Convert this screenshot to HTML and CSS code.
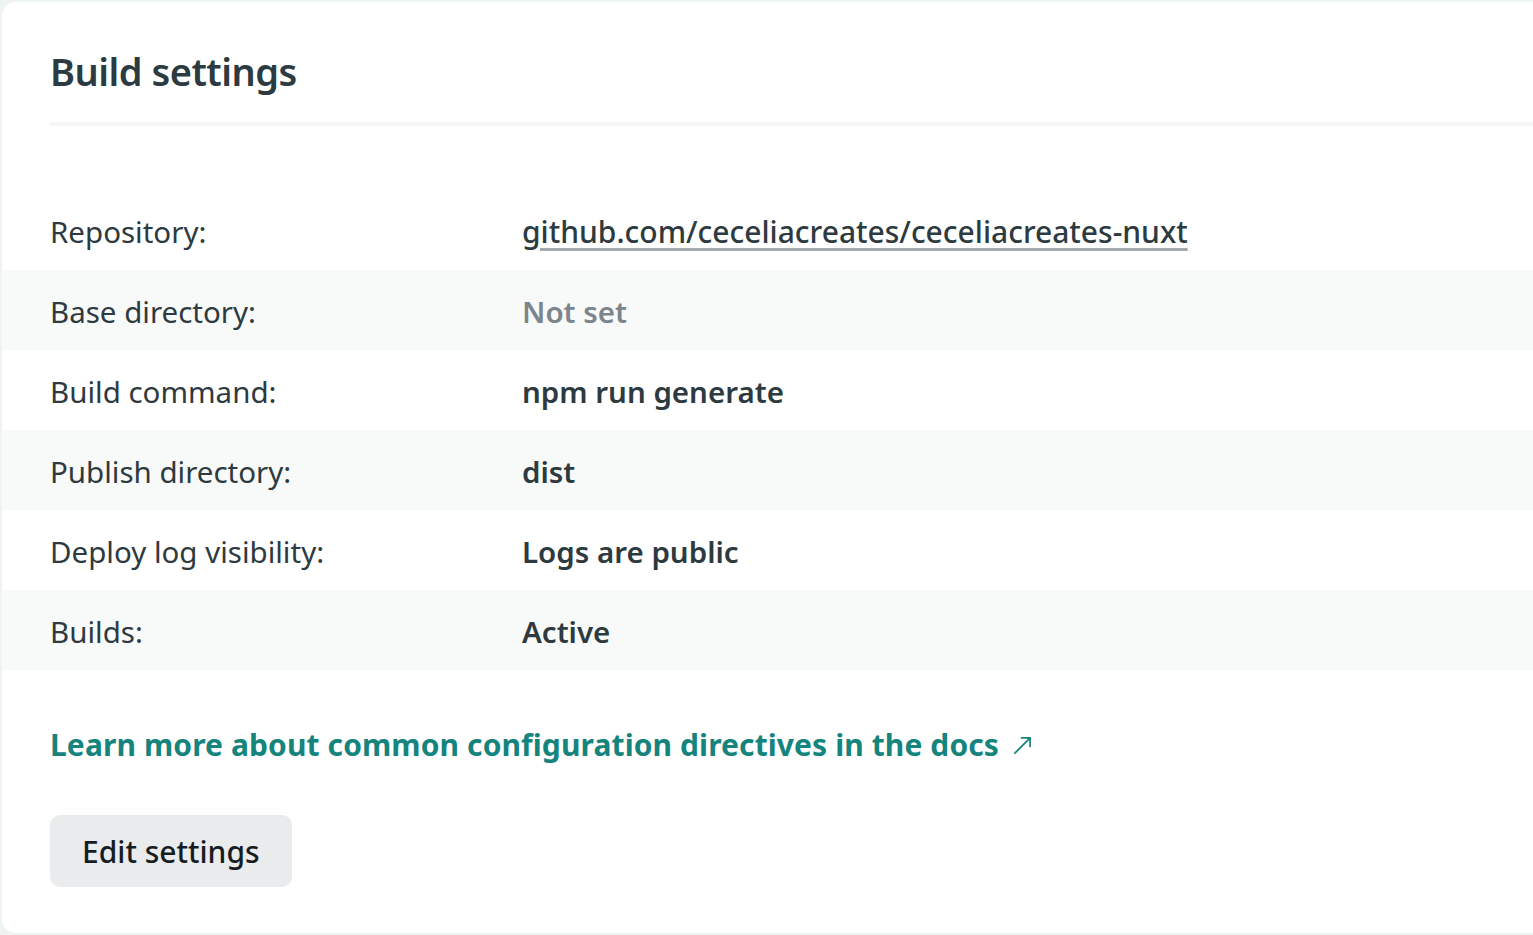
FILE: index.html
```html
<!DOCTYPE html>
<html lang="en">
<head>
<meta charset="utf-8">
<title>Build settings</title>
<link rel="stylesheet" href="styles.css">
</head>
<body>
<section class="card">
  <header class="card-header">
    <h2 class="card-title">Build settings</h2>
  </header>
  <dl class="settings">
    <div class="row">
      <dt class="label">Repository:</dt>
      <dd class="value"><a class="repo-link" href="#">github.com/ceceliacreates/ceceliacreates-nuxt</a></dd>
    </div>
    <div class="row striped">
      <dt class="label">Base directory:</dt>
      <dd class="value muted">Not set</dd>
    </div>
    <div class="row">
      <dt class="label">Build command:</dt>
      <dd class="value strong">npm run generate</dd>
    </div>
    <div class="row striped">
      <dt class="label">Publish directory:</dt>
      <dd class="value strong">dist</dd>
    </div>
    <div class="row">
      <dt class="label">Deploy log visibility:</dt>
      <dd class="value strong">Logs are public</dd>
    </div>
    <div class="row striped">
      <dt class="label">Builds:</dt>
      <dd class="value">Active</dd>
    </div>
  </dl>
  <div class="card-footer">
    <a class="docs-link" href="#">Learn more about common configuration directives in the docs<svg class="ext-icon" viewBox="0 0 20 20" width="20" height="20" aria-hidden="true"><path d="M2 18 L18 2 M9 2 H18 V11" fill="none" stroke="currentColor" stroke-width="1.8" stroke-linecap="round" stroke-linejoin="round"/></svg></a>
    <button class="btn" type="button">Edit settings</button>
  </div>
</section>
</body>
</html>
```
FILE: styles.css
```css
html, body {
  margin: 0;
  padding: 0;
}
body {
  background: #eef3f3;
  font-family: "Noto Sans", "Open Sans", sans-serif;
  color: #2d3a40;
  overflow: hidden;
  height: 935px;
}
.card {
  background: #ffffff;
  margin: 2px -40px 0 2px;
  height: 931px;
  border-radius: 14px;
  box-sizing: border-box;
}
.card-header {
  margin-left: 48px;
  border-bottom: 4px solid #f5f7f7;
  padding-top: 43px;
  height: 124px;
  box-sizing: border-box;
}
.card-title {
  margin: 0;
  font-size: 38px;
  line-height: 52px;
  font-weight: 600;
  letter-spacing: -0.5px;
  color: #2c3a41;
}
.settings {
  margin: 64px 0 0 0;
  padding: 0;
}
.row {
  display: flex;
  align-items: center;
  height: 80px;
  padding-left: 48px;
  padding-top: 2px;
  box-sizing: border-box;
}
.row.striped {
  background: #f8fafa;
}
.label {
  width: 472px;
  flex: none;
  font-size: 29.5px;
  color: #2e3a40;
}
.value {
  margin: 0;
  font-size: 29.5px;
  font-weight: 600;
  color: #2d3a40;
}
.value.muted {
  color: #7c858b;
}
.repo-link {
  color: #2d3a40;
  font-size: 30px;
  font-weight: 500;
  text-decoration: underline;
  text-decoration-color: #a3aaaf;
  text-decoration-thickness: 2.5px;
  text-underline-offset: 5px;
}
.card-footer {
  padding-left: 48px;
  padding-top: 55px;
}
.docs-link {
  display: inline-flex;
  align-items: center;
  gap: 14px;
  font-size: 30px;
  font-weight: 700;
  letter-spacing: 0.1px;
  color: #15847d;
  text-decoration: none;
  line-height: 40px;
}
.ext-icon {
  width: 19px;
  height: 19px;
}
.btn {
  display: block;
  margin-top: 50px;
  height: 72px;
  padding: 0 32px;
  border: 0;
  border-radius: 10px;
  background: #e9ebed;
  font-family: inherit;
  font-size: 30px;
  font-weight: 500;
  color: #151d22;
}
```
